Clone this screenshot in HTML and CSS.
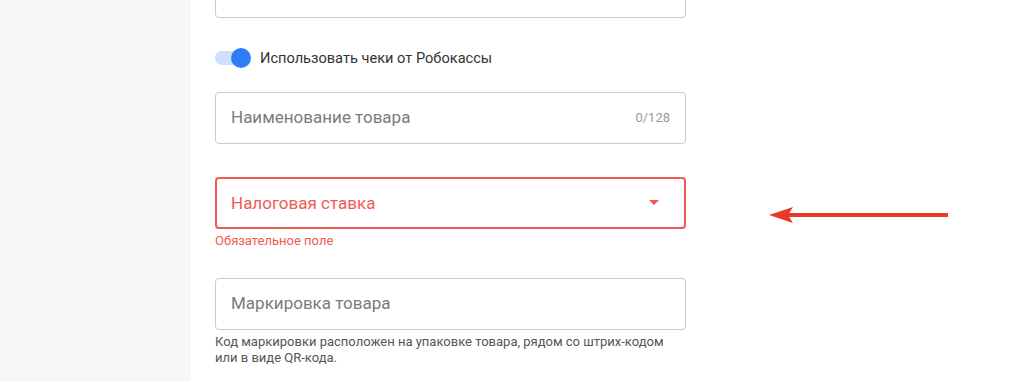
FILE: index.html
```html
<!DOCTYPE html>
<html>
<head>
    <meta charset="UTF-8">
    <meta name="viewport" content="width=device-width, initial-scale=1.0">
    <title>Настройки фискализации</title>
    <link rel="stylesheet" href="styles.css">
</head>
<body>
    <div class="sidebar"></div>

    <div class="content">
        <div class="field field-top">
            <span class="value">Идентификатор магазина у Робокассы</span>
        </div>

        <label class="switch-row">
            <span class="switch">
                <span class="switch-track"></span>
                <span class="switch-thumb"></span>
            </span>
            <span class="switch-label">Использовать чеки от Робокассы</span>
        </label>

        <div class="field field-name">
            <span class="placeholder">Наименование товара</span>
            <span class="counter">0/128</span>
        </div>

        <div class="field field-error">
            <span class="placeholder">Налоговая ставка</span>
            <span class="caret"></span>
        </div>
        <p class="hint hint-error">Обязательное поле</p>

        <div class="field field-mark">
            <span class="placeholder">Маркировка товара</span>
        </div>
        <p class="hint">Код маркировки расположен на упаковке товара, рядом со штрих-кодом<br>или в виде QR-кода.</p>
    </div>

    <!-- annotation arrow pointing at the tax field -->
    <svg class="pointer" width="190" height="24" viewBox="0 0 190 24">
        <line x1="20" y1="12" x2="180" y2="12" stroke="#e8392b" stroke-width="4"/>
        <polygon points="1,12 25,4 20,12 25,20" fill="#e8392b"/>
    </svg>
</body>
</html>
```

FILE: styles.css
```css
body {
    font-family: Roboto, "Liberation Sans", Arial, sans-serif;
    background-color: #fff;
    margin: 0;
    padding: 0;
    display: flex;
    height: 381px;
    overflow: hidden;
}

.sidebar {
    width: 191px;
    flex-shrink: 0;
    background-color: #f7f7f7;
}

.content {
    padding-left: 24px;
    width: 471px;
}

.field {
    height: 52px;
    border: 1px solid #c9c9c9;
    border-radius: 4px;
    box-sizing: border-box;
    display: flex;
    align-items: center;
    padding: 0 15px 2px;
    font-size: 17px;
}

.field-top {
    margin-top: -34px;
    align-items: flex-end;
    padding-bottom: 0;
}

.field-top .value {
    color: #333;
    margin-bottom: 16px;
}

.placeholder {
    color: #7b7b7b;
    flex: 1;
}

.switch-row {
    display: flex;
    align-items: center;
    height: 20px;
    margin-top: 30px;
    cursor: pointer;
}

.switch {
    position: relative;
    width: 36px;
    height: 20px;
    margin-right: 9px;
}

.switch-track {
    position: absolute;
    left: 0;
    top: 3px;
    width: 34px;
    height: 14px;
    border-radius: 7px;
    background-color: #cfe0fd;
}

.switch-thumb {
    position: absolute;
    left: 16px;
    top: 0;
    width: 20px;
    height: 20px;
    border-radius: 50%;
    background-color: #2f7cf6;
}

.switch-label {
    font-size: 14.6px;
    color: #333;
}

.field-name {
    margin-top: 24px;
}

.counter {
    font-size: 13px;
    color: #9a9a9a;
}

.field-error {
    margin-top: 33px;
    border: 2px solid #ef5b53;
    padding: 0 14px 1px;
}

.field-error .placeholder {
    color: #ef5b53;
}

.caret {
    width: 0;
    height: 0;
    border-left: 5px solid transparent;
    border-right: 5px solid transparent;
    border-top: 5px solid #ef5b53;
    margin-right: 11px;
}

.hint {
    margin: 4px 0 0;
    font-size: 13px;
    line-height: 16px;
    color: #555;
}

.hint-error {
    color: #ef5b53;
}

.field-mark {
    margin-top: 29px;
}

.pointer {
    position: absolute;
    left: 768px;
    top: 203px;
}
```
